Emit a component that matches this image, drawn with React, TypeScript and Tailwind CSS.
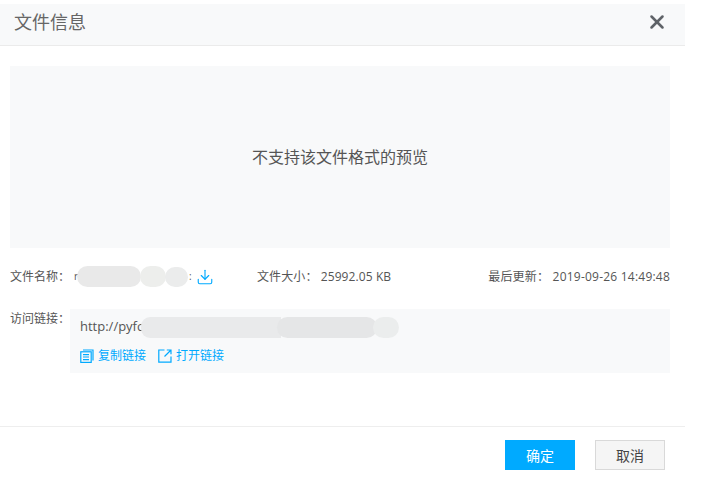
import { Download, X } from 'lucide-react'

const fontStack = 'font-["Open_Sans","Noto_Sans_CJK_SC",sans-serif]'

function Smudge({ className }: { className: string }) {
  return <span className={`block shrink-0 ${className}`} />
}

function CopyIcon() {
  return (
    <svg width="14" height="14" viewBox="0 0 14 14" fill="none" stroke="#00aaff" strokeWidth="1.2">
      <path d="M3 1h10v10.4" />
      <rect x="0.8" y="2.8" width="10.4" height="10.6" />
      <path d="M3 5.6h6M3 8h6M3 10.6h6" />
    </svg>
  )
}

function OpenIcon() {
  return (
    <svg width="14" height="14" viewBox="0 0 14 14" fill="none" stroke="#00aaff" strokeWidth="1.2">
      <path d="M6.5 1H0.8v12.2H13V7.5" />
      <path d="M6.5 7.5l6-6M8.8 1h4.2v4.2" />
    </svg>
  )
}

export default function App() {
  return (
    <div className={`w-[718px] h-[494px] bg-white pt-[4px] text-[#555] ${fontStack}`}>
      <div className="w-[685px]">
        {/* Header */}
        <div className="h-[42px] flex items-center justify-between bg-[#f8f9fa] border-b border-[#ebebeb] pb-[5px] pl-[14px] pr-[17px]">
          <h1 className="text-[18px] leading-[36px] font-normal text-[#666]">文件信息</h1>
          <X size={22} strokeWidth={2.8} className="text-[#5f6368]" />
        </div>

        {/* Body */}
        <div className="h-[380px] pl-[10px] pr-[15px] pt-[20px]">
          <div className="h-[182px] bg-[#f8f9fa] flex items-center justify-center text-[16px] text-[#555]">
            不支持该文件格式的预览
          </div>

          <div className="mt-[20px] h-[17px] flex items-center text-[12px] leading-[17px]">
            <div className="w-[247px] flex items-center">
              <span className="w-[64px]">文件名称：</span>
              <span className="w-[122px] flex items-center">
                <span className="w-[3px] text-[10px]">r</span>
                <Smudge className="w-[64px] h-[21px] rounded-full bg-[#e9e9e9]" />
                <Smudge className="w-[26px] h-[21px] -ml-[1px] rounded-full bg-[#edeeec]" />
                <Smudge className="w-[23px] h-[20px] -ml-[1px] rounded-full bg-[#ebecec]" />
                <span className="ml-[1px] text-[10px]">:</span>
              </span>
              <Download size={18} strokeWidth={1.5} className="text-[#00aaff]" />
            </div>
            <div className="flex-1 tracking-[0.1px]">文件大小：&nbsp;25992.05 KB</div>
            <div className="tracking-[0.22px]">最后更新：&nbsp;2019-09-26 14:49:48</div>
          </div>

          <div className="mt-[24px] flex">
            <span className="w-[60px] text-[12px] leading-[17px] pt-[1px]">访问链接：</span>
            <div className="flex-1 h-[64px] bg-[#f8f9fa] pl-[10px] pt-[8px]">
              <div className="h-[20px] flex items-center text-[13px]">
                <span>http://pyfc</span>
                <Smudge className="w-[140px] h-[21px] -ml-[2px] rounded-l-[9px] bg-[#e9eaeb]" />
                <Smudge className="w-[100px] h-[21px] -ml-[4px] rounded-full bg-[#e5e6e7]" />
                <Smudge className="w-[26px] h-[21px] -ml-[4px] rounded-full bg-[#ebeded]" />
              </div>
              <div className="mt-[10px] flex items-center gap-[12px] text-[12px] leading-[17px] text-[#00aaff]">
                <span className="flex items-center gap-[4px]">
                  <CopyIcon />
                  复制链接
                </span>
                <span className="flex items-center gap-[4px]">
                  <OpenIcon />
                  打开链接
                </span>
              </div>
            </div>
          </div>
        </div>

        {/* Footer */}
        <div className="border-t border-[#eeeeee] pt-[13px] pr-[20px] flex justify-end gap-[20px] text-[14px]">
          <button className="w-[70px] h-[30px] bg-[#00aaff] text-white">确定</button>
          <button className="w-[70px] h-[30px] bg-[#f5f5f5] border border-[#d9d9d9] text-[#444]">取消</button>
        </div>
      </div>
    </div>
  )
}
